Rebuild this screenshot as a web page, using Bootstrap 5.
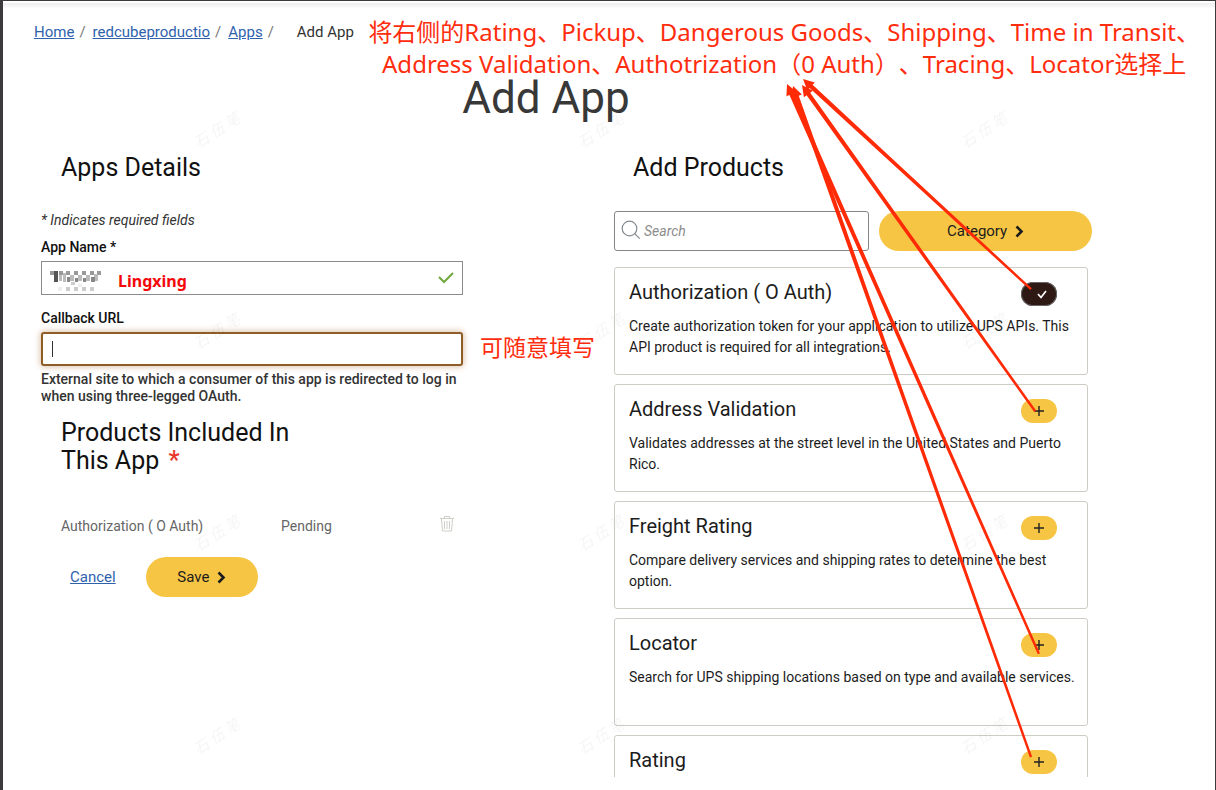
<!DOCTYPE html>
<html lang="en">
<head>
<meta charset="utf-8">
<meta name="viewport" content="width=device-width, initial-scale=1">
<title>Add App</title>
<link href="https://cdn.jsdelivr.net/npm/bootstrap@5.3.0/dist/css/bootstrap.min.css" rel="stylesheet">
<script src="https://cdn.jsdelivr.net/npm/bootstrap@5.3.0/dist/js/bootstrap.bundle.min.js"></script>
<style>
  :root { --gold: #f6c544; --ink: #1c1c1c; --note: #ff2d0d; --link: #2f62ad; }
  body { font-family: Roboto, "Liberation Sans", sans-serif; font-size: 14px; color: var(--ink); background: #fff; }
  .page-frame { border: 1px solid #3d3a3d; border-left-width: 3px; border-bottom: 0; padding-bottom: 13px; }
  .top-shade { height: 8px; background: linear-gradient(#fff 20%, #efefef 30%, #fff); }
  a { color: var(--link); }
  .crumbs { font-size: 15px; line-height: 20px; padding: 13px 31px 0; color: #777; }
  .crumbs .slash { margin: 0 7px 0 5px; }
  .crumbs .current { color: #333; margin-left: 16px; }
  .page-title { font-size: 44px; line-height: 52px; color: #383838; font-weight: 400; margin-top: 30px; padding-right: 126px; }
  .section-title { font-size: 25px; line-height: 28px; font-weight: 400; color: #111; }
  .title-row { margin-top: 30px; }
  .columns { min-height: 0; }
  .details { padding: 0 146px 0 38px; }
  .products { padding: 0 127px 0 5px; }
  .hint { font-size: 14px; line-height: 18px; color: #333; margin-top: 29px; margin-bottom: 9px; }
  .field-label { font-size: 14px; line-height: 18px; font-weight: 500; color: #111; }
  .field-help { font-size: 14px; line-height: 17px; font-weight: 500; color: #333; margin-top: -9px; }
  .field-wrap { margin-top: 5px; margin-bottom: 14px; }
  .field { height: 34px; border: 1px solid #8b8b8b; border-radius: 0; }
  .field-active, .field-active:focus { border: 2px solid #8f5d27; border-radius: 3px; box-shadow: 0 0 6px 1px #dcc4ac; }
  .caret { left: 11px; top: 9px; width: 1px; height: 16px; background: #333; }
  .mosaic { left: 8px; top: 8px; }
  .valid-tick { right: 9px; top: 10px; }
  .value-note { left: 77px; top: 8px; font: 700 16px/24px "Noto Sans", sans-serif; color: #f30909; }
  .note { font-family: "Noto Sans", "Noto Sans CJK SC", sans-serif; color: var(--note); white-space: nowrap; font-size: 24px; line-height: 32px; text-spacing-trim: space-all; }
  .note-main { right: 15px; top: 15px; }
  .note-side { left: 100%; bottom: 3px; margin-left: 17px; font-size: 23px; }
  .included-title { margin: 14px 0 0; }
  .included-title .star { color: #e8392c; font-weight: 500; margin-left: 3px; }
  .included { color: #666; line-height: 20px; margin-top: 41px; }
  .included td { padding: 0; }
  .included .name-cell { width: 220px; }
  .included-wrap { padding: 0 9px 0 20px; }
  .actions { margin-top: 21px; padding-left: 29px; gap: 30px; }
  .gold-btn, .gold-btn:hover { background: var(--gold); color: var(--ink); border: 0; height: 40px; border-radius: 20px; font-size: 15px; }
  .save-btn { width: 112px; }
  .cancel { font-size: 15px; }
  .products-title { margin-left: 19px; }
  .toolbar { margin-top: 29px; margin-right: -4px; gap: 10px; }
  .search-box { height: 40px; border: 1px solid #858585; border-radius: 3px; padding: 0 12px 0 29px; font-size: 14px; }
  .search-box::placeholder { font-style: italic; color: #8c8c8c; }
  .search-icon { left: 7px; top: 9px; }
  .category-btn { flex: 0 0 213px; }
  .product-list { margin-top: 16px; gap: 9px; overflow: hidden; min-height: 0; }
  .product { flex: 0 0 auto; min-height: 108px; border: 1px solid #cfcbc5; border-radius: 3px; padding: 11px 8px 12px 14px; }
  .product h3 { font-size: 20px; line-height: 26px; font-weight: 400; margin: 0; }
  .product p { font-size: 14px; line-height: 21px; margin: 11px 0 0; }
  .pill { width: 36px; height: 24px; border: 0; border-radius: 12px; background: var(--gold); margin: 3px 22px 0 0; }
  .product .d-flex { height: 26px; }
  .pill-on { background: #2e1914; box-shadow: inset 0 0 0 1px #666; }
  .overlay { left: 0; top: 0; pointer-events: none; }
  .watermark { font: italic 15px "Noto Sans CJK SC", sans-serif; fill: #000; opacity: .04; }
</style>
</head>
<body>
<div class="page-frame position-relative vh-100 overflow-hidden d-flex flex-column">
  <div class="top-shade flex-shrink-0"></div>
  <header>
    <nav class="crumbs d-flex" aria-label="Breadcrumb">
      <a href="#">Home</a><span class="slash">/</span><a href="#">redcubeproductio</a><span class="slash">/</span><a href="#">Apps</a><span class="slash">/</span><span class="current">Add App</span>
    </nav>
    <h1 class="page-title text-center mb-0">Add App</h1>
  </header>
  <div class="note note-main position-absolute text-center">将右侧的Rating、Pickup、Dangerous Goods、Shipping、Time in Transit、<br>Address Validation、Authotrization（0 Auth）、Tracing、Locator选择上</div>

  <main class="columns row gx-0 flex-grow-1 flex-nowrap">
    <section class="col-6 details">
      <h2 class="section-title title-row ms-3 ps-1 mb-0">Apps Details</h2>
      <p class="hint fst-italic">* Indicates required fields</p>
      <form>
        <label class="field-label d-block" for="appName">App Name *</label>
        <div class="position-relative field-wrap">
          <input class="form-control field" id="appName" type="text">
          <svg class="mosaic position-absolute" width="56" height="24" viewBox="0 0 56 24" aria-hidden="true">
            <path fill="#999" d="M1 2h6v4H1zM10 2h4v4h-4zM17 2h4v4h-4zM25 2h4v4h-4zM33 2h4v4h-4zM41 2h4v4h-4zM48 2h4v4h-4z"/>
            <path fill="#555" d="M5 2h4v11H5z"/>
            <path fill="#bbb" d="M10 6h3v6h-3zM14 4h3v9h-3zM21 6h4v6h-4zM29 6h4v6h-4zM37 6h4v6h-4zM45 5h4v7h-4z"/>
            <path fill="#888" d="M18 8h3v5h-3zM26 9h3v4h-3zM34 9h3v4h-3zM42 8h4v5h-4z"/>
            <path fill="#ccc" d="M17 18h4v4h-4zM25 18h4v4h-4zM33 18h4v4h-4zM41 18h4v4h-4zM22 13h4v3h-4z"/>
            <path fill="#eee" d="M9 18h4v4H9zM29 15h4v3h-4z"/>
          </svg>
          <span class="value-note position-absolute">Lingxing</span>
          <svg class="valid-tick position-absolute" width="16" height="13" viewBox="0 0 16 13" aria-hidden="true"><path d="M1 6l5 5 9-9" fill="none" stroke="#6fa83c" stroke-width="2"/></svg>
        </div>
        <label class="field-label d-block" for="callback">Callback URL</label>
        <div class="position-relative field-wrap">
          <input class="form-control field field-active" id="callback" type="text">
          <span class="caret position-absolute"></span>
          <span class="note note-side position-absolute">可随意填写</span>
        </div>
        <p class="field-help mb-0">External site to which a consumer of this app is redirected to log in when using three-legged OAuth.</p>
        <h2 class="section-title included-title ms-3 ps-1">Products Included In<br>This App <span class="star">*</span></h2>
        <div class="included-wrap">
          <table class="included w-100">
            <tbody><tr>
              <td class="name-cell">Authorization ( O Auth)</td>
              <td>Pending</td>
              <td class="text-end"><svg class="align-top" width="14" height="16" viewBox="0 0 14 16" fill="none" stroke="#cfcfc9" aria-hidden="true"><path d="M0 2.500h14M4.500 2V.500h5V2M1.500 3l1 12h9l1-12M4.500 5v8M7 5v8M9.500 5v8"/></svg></td>
            </tr></tbody>
          </table>
        </div>
        <div class="actions d-flex align-items-center">
          <a class="cancel" href="#">Cancel</a>
          <button class="btn gold-btn save-btn p-0" type="button">Save <svg class="ms-1" width="9" height="13" viewBox="0 0 9 13" aria-hidden="true"><path d="M1.500 1.500l5 5-5 5" fill="none" stroke="#1c1c1c" stroke-width="2.600"/></svg></button>
        </div>
      </form>
    </section>

    <section class="col-6 products d-flex flex-column">
      <h2 class="section-title title-row products-title mb-0">Add Products</h2>
      <div class="toolbar d-flex flex-shrink-0">
        <div class="position-relative flex-grow-1">
          <input class="form-control search-box" type="search" placeholder="Search" aria-label="Search">
          <svg class="search-icon position-absolute" width="20" height="20" viewBox="0 0 20 20" fill="none" stroke="#858b8f" stroke-width="1.200" aria-hidden="true"><circle cx="8.500" cy="8.500" r="7.300"/><path d="M13.800 13.800l5 4.800"/></svg>
        </div>
        <button class="btn gold-btn category-btn p-0" type="button">Category <svg class="ms-1" width="9" height="13" viewBox="0 0 9 13" aria-hidden="true"><path d="M1.500 1.500l5 5-5 5" fill="none" stroke="#1c1c1c" stroke-width="2.600"/></svg></button>
      </div>
      <div class="product-list d-flex flex-column">
        <article class="product">
          <div class="d-flex justify-content-between"><h3>Authorization ( O Auth)</h3><button class="pill pill-on p-0" type="button" aria-label="Added"><svg class="d-block ms-auto me-2" width="14" height="12" viewBox="0 0 14 12" aria-hidden="true"><path d="M3 6l3 3.500L11 3" fill="none" stroke="#fff" stroke-width="1.700"/></svg></button></div>
          <p>Create authorization token for your application to utilize UPS APIs. This API product is required for all integrations.</p>
        </article>
        <article class="product">
          <div class="d-flex justify-content-between"><h3>Address Validation</h3><button class="pill p-0" type="button" aria-label="Add"><svg class="d-block mx-auto" width="10" height="10" viewBox="0 0 10 10" aria-hidden="true"><path d="M5 0v10M0 5h10" stroke="#222" stroke-width="1.400"/></svg></button></div>
          <p>Validates addresses at the street level in the United States and Puerto Rico.</p>
        </article>
        <article class="product">
          <div class="d-flex justify-content-between"><h3>Freight Rating</h3><button class="pill p-0" type="button" aria-label="Add"><svg class="d-block mx-auto" width="10" height="10" viewBox="0 0 10 10" aria-hidden="true"><path d="M5 0v10M0 5h10" stroke="#222" stroke-width="1.400"/></svg></button></div>
          <p>Compare delivery services and shipping rates to determine the best option.</p>
        </article>
        <article class="product">
          <div class="d-flex justify-content-between"><h3>Locator</h3><button class="pill p-0" type="button" aria-label="Add"><svg class="d-block mx-auto" width="10" height="10" viewBox="0 0 10 10" aria-hidden="true"><path d="M5 0v10M0 5h10" stroke="#222" stroke-width="1.400"/></svg></button></div>
          <p>Search for UPS shipping locations based on type and available services.</p>
        </article>
        <article class="product">
          <div class="d-flex justify-content-between"><h3>Rating</h3><button class="pill p-0" type="button" aria-label="Add"><svg class="d-block mx-auto" width="10" height="10" viewBox="0 0 10 10" aria-hidden="true"><path d="M5 0v10M0 5h10" stroke="#222" stroke-width="1.400"/></svg></button></div>
        </article>
      </div>
    </section>
  </main>

  <!-- arrows from the note to the product buttons, and the watermark grid -->
  <svg class="overlay position-absolute" width="1213" height="789" viewBox="3 1 1213 789" aria-hidden="true">
    <g class="watermark" text-anchor="middle">
      <text transform="translate(220 135) rotate(-33)">石 伍 笔</text><text transform="translate(604 135) rotate(-33)">石 伍 笔</text><text transform="translate(987 135) rotate(-33)">石 伍 笔</text>
      <text transform="translate(220 336) rotate(-33)">石 伍 笔</text><text transform="translate(604 336) rotate(-33)">石 伍 笔</text><text transform="translate(987 336) rotate(-33)">石 伍 笔</text>
      <text transform="translate(220 538) rotate(-33)">石 伍 笔</text><text transform="translate(604 538) rotate(-33)">石 伍 笔</text><text transform="translate(987 538) rotate(-33)">石 伍 笔</text>
      <text transform="translate(220 741) rotate(-33)">石 伍 笔</text><text transform="translate(604 741) rotate(-33)">石 伍 笔</text><text transform="translate(987 741) rotate(-33)">石 伍 笔</text>
    </g>
    <g fill="#ff2a06">
      <path transform="translate(803 79) rotate(42.650)" d="M0 0L11-5.500V-2.200L310-1.200V1.200L11 2.200V5.500z"/>
      <path transform="translate(802 85) rotate(54.450)" d="M0 0L11-5.500V-2.200L401-1.200V1.200L11 2.200V5.500z"/>
      <path transform="translate(787 84) rotate(66.150)" d="M0 0L11-5.500V-2.200L623-1.200V1.200L11 2.200V5.500z"/>
      <path transform="translate(793 86) rotate(70.470)" d="M0 0L11-5.500V-2.200L712-1.200V1.200L11 2.200V5.500z"/>
    </g>
  </svg>
</div>
</body>
</html>
